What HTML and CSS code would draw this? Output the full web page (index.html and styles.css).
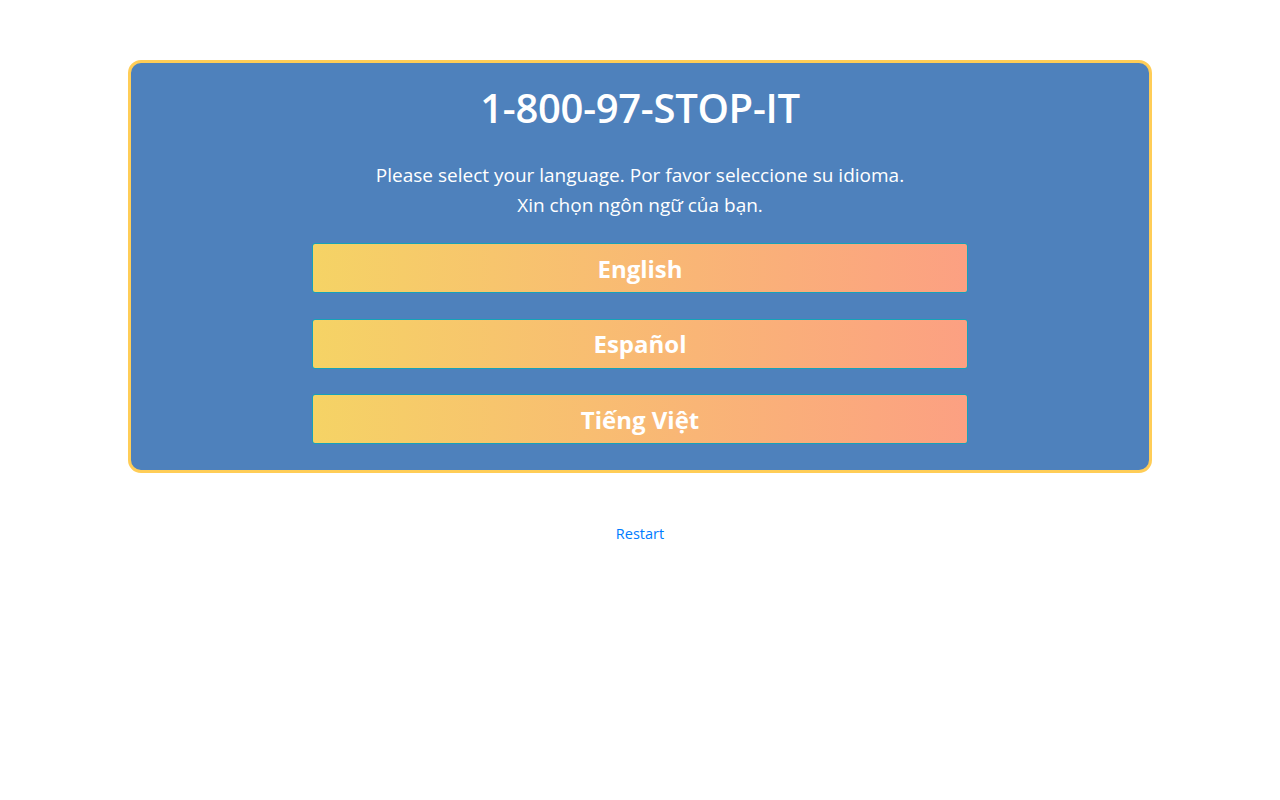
FILE: index.html
```html
<!DOCTYPE html>
<html>
<head>
<meta charset="utf-8">
<link rel="stylesheet" href="styles.css">
</head>
<body>
<div class="page">
  <div class="card">
    <h1 class="title">1-800-97-STOP-IT</h1>
    <p class="prompt">Please select your language. Por favor seleccione su idioma.<br>Xin chọn ngôn ngữ của bạn.</p>
    <div class="buttons">
      <button class="lang">English</button>
      <button class="lang">Español</button>
      <button class="lang">Tiếng Việt</button>
    </div>
  </div>
  <div class="footer"><a class="restart" href="#">Restart</a></div>
</div>
</body>
</html>
```
FILE: styles.css
```css
html, body {
  margin: 0;
  padding: 0;
  background: #fff;
}
body {
  font-family: "Open Sans", "Noto Sans", sans-serif;
  color: #212529;
}
.page {
  width: 1024px;
  margin: 60px auto 0;
}
.card {
  box-sizing: border-box;
  background: #4e81bc;
  border: 3px solid #ffcd57;
  border-radius: 13px;
  padding: 21px 0 26px;
  color: #fff;
  text-align: center;
}
.title {
  margin: 0;
  font-size: 40px;
  font-weight: 600;
  letter-spacing: -0.3px;
  line-height: 48px;
}
.prompt {
  margin: 28px 0 0;
  font-size: 19px;
  line-height: 30px;
}
.buttons {
  display: flex;
  flex-direction: column;
  align-items: center;
  gap: 25.5px;
  margin-top: 23px;
}
.lang {
  box-sizing: border-box;
  width: 656px;
  height: 50px;
  border: 1px solid #17a2b8;
  border-radius: 3px;
  background: linear-gradient(to right, #f5d365, #fca082);
  color: #fff;
  font-family: inherit;
  font-size: 24px;
  font-weight: 700;
  padding: 0;
}
.footer {
  text-align: center;
  margin-top: 49px;
}
.restart {
  color: #007bff;
  text-decoration: none;
  font-size: 14.5px;
}
```
